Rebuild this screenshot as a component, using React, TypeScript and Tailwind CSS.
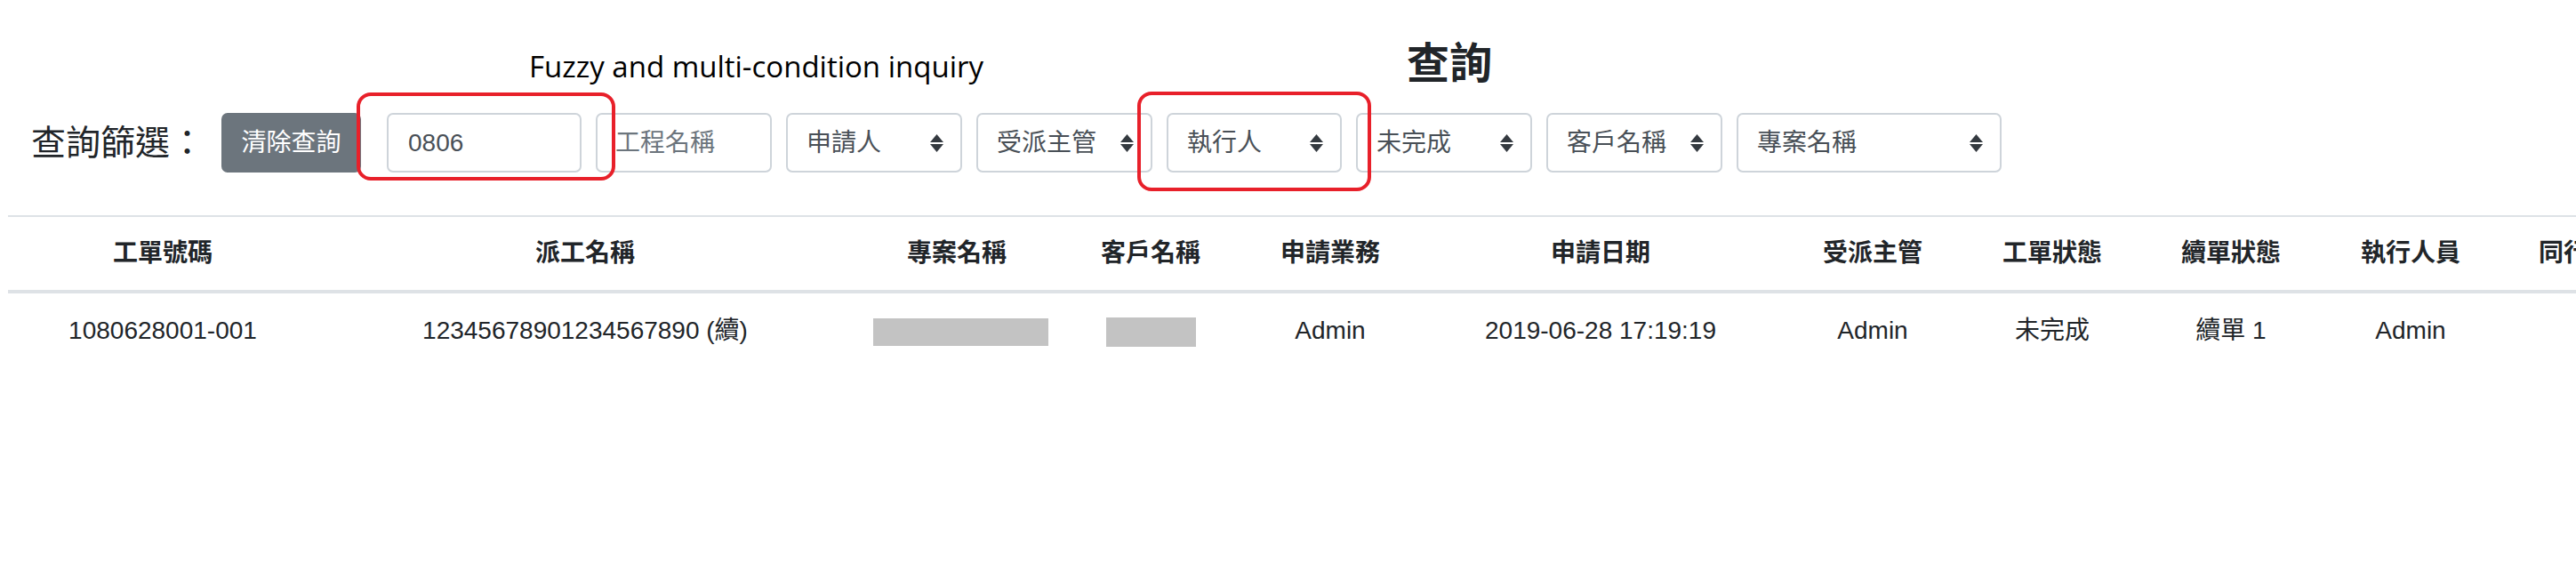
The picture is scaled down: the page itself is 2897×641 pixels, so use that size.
const selects = [
  { label: '申請人', w: 'w-[198px]' },
  { label: '受派主管', w: 'w-[198px]' },
  { label: '執行人', w: 'w-[197px]' },
  { label: '未完成', w: 'w-[198px]' },
  { label: '客戶名稱', w: 'w-[198px]' },
];

const columns = [
  { title: '工單號碼', w: 'w-[348px]' },
  { title: '派工名稱', w: 'w-[602px]' },
  { title: '專案名稱', w: 'w-[234px]' },
  { title: '客戶名稱', w: 'w-[202px]' },
  { title: '申請業務', w: 'w-[202px]' },
  { title: '申請日期', w: 'w-[406px]' },
  { title: '受派主管', w: 'w-[206px]' },
  { title: '工單狀態', w: 'w-[198px]' },
  { title: '續單狀態', w: 'w-[204px]' },
  { title: '執行人員', w: 'w-[200px]' },
  { title: '同行人員', w: 'w-[200px]' },
  { title: '操作', w: 'w-[200px]' },
];

function SortArrows() {
  return (
    <svg width="15" height="20" viewBox="0 0 15 20" className="shrink-0">
      <path d="M0 9 L7.5 0 L15 9 Z" fill="#343a40" />
      <path d="M0 11 L15 11 L7.5 20 Z" fill="#343a40" />
    </svg>
  );
}

function FakeSelect({ label, w }: { label: string; w: string }) {
  return (
    <div className={`${w} h-[67px] flex items-center justify-between pl-[21px] pr-[19px] border-2 border-[#ced4da] rounded-[7px] bg-white text-[28px] text-[#495057]`}>
      <span>{label}</span>
      <SortArrows />
    </div>
  );
}

export default function App() {
  return (
    <div className="relative w-full h-[641px] overflow-hidden bg-white text-[#212529] font-['Liberation_Sans','Noto_Sans_CJK_TC',sans-serif]">
      {/* title */}
      <div className="pt-[48px] pl-[1582px]">
        <h1 className="text-[48px] leading-[48px] font-bold text-[#212529]">查詢</h1>
      </div>

      {/* filters */}
      <div className="mt-[31px] flex items-center h-[67px] pl-[35px]">
        <span className="text-[39px] leading-[67px] mr-[19px]">查詢篩選：</span>
        <button className="h-[67px] w-[157px] rounded-[7px] bg-[#6c757d] text-white text-[28px] mr-[29px]">
          清除查詢
        </button>
        <div className="flex items-center gap-[16px]">
          <input
            className="w-[219px] h-[67px] px-[22px] border-2 border-[#ced4da] rounded-[7px] text-[28px] text-[#495057] outline-none"
            defaultValue="0806"
          />
          <input
            className="w-[198px] h-[67px] px-[20px] border-2 border-[#ced4da] rounded-[7px] text-[28px] text-[#495057] placeholder:text-[#6c757d] outline-none"
            placeholder="工程名稱"
          />
          {selects.map((s) => (
            <FakeSelect key={s.label} label={s.label} w={s.w} />
          ))}
          <FakeSelect label="專案名稱" w="w-[298px]" />
        </div>
      </div>

      {/* table */}
      <div className="mt-[48px] ml-[9px]">
        <table className="table-fixed border-collapse w-[3202px] text-[28px]">
          <thead>
            <tr>
              {columns.map((c) => (
                <th
                  key={c.title}
                  className={`${c.w} border-t-2 border-b-4 border-[#dee2e6] py-[20px] leading-[42px] font-bold text-center`}
                >
                  {c.title}
                </th>
              ))}
            </tr>
          </thead>
          <tbody>
            <tr className="text-center leading-[42px]">
              <td className="py-[21px]">1080628001-001</td>
              <td className="py-[21px]">12345678901234567890 (續)</td>
              <td className="py-[21px] text-left pl-[23px]">
                <div className="inline-block align-middle w-[197px] h-[31px] bg-[#c3c3c3]" />
              </td>
              <td className="py-[21px]">
                <div className="inline-block align-middle w-[101px] h-[33px] bg-[#c3c3c3]" />
              </td>
              <td className="py-[21px]">Admin</td>
              <td className="py-[21px]">2019-06-28 17:19:19</td>
              <td className="py-[21px]">Admin</td>
              <td className="py-[21px]">未完成</td>
              <td className="py-[21px]">續單 1</td>
              <td className="py-[21px]">Admin</td>
              <td className="py-[21px]"></td>
              <td className="py-[21px]"></td>
            </tr>
          </tbody>
        </table>
      </div>

      {/* annotations */}
      <p className="absolute left-[595px] top-[58px] text-[33px] leading-[33px] text-black font-['Open_Sans',sans-serif] whitespace-nowrap">
        Fuzzy and multi-condition inquiry
      </p>
      <div className="absolute left-[401px] top-[104px] w-[291px] h-[99px] border-4 border-[#e8202a] rounded-[16px]" />
      <div className="absolute left-[1279px] top-[103px] w-[263px] h-[112px] border-4 border-[#e8202a] rounded-[16px]" />
    </div>
  );
}
